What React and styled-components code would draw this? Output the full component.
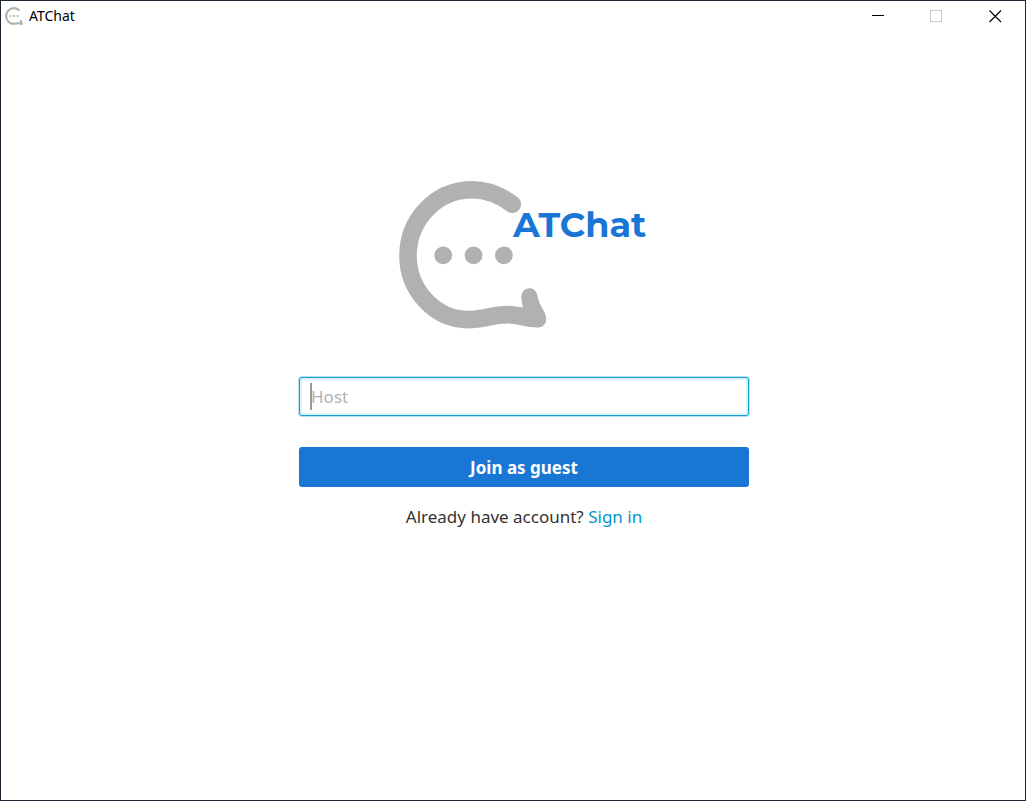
import React from "react";
import styled, { createGlobalStyle } from "styled-components";

const GlobalStyle = createGlobalStyle`
  *, *::before, *::after { box-sizing: border-box; }
  body {
    margin: 0;
    background: #fff;
    font-family: "Segoe UI", "Noto Sans", "Open Sans", sans-serif;
  }
`;

const Window = styled.div`
  display: flex;
  flex-direction: column;
  min-height: 100vh;
  border: 1px solid #1c2733;
  background: #fff;
`;

const TitleBar = styled.header`
  display: flex;
  align-items: center;
  justify-content: space-between;
  height: 30px;
`;

const AppTitle = styled.div`
  display: flex;
  align-items: center;
  gap: 6px;
  padding-left: 4px;
  font-size: 14px;
  line-height: 20px;
  color: #000;
`;

const WindowControls = styled.div`
  display: flex;
  height: 100%;
`;

const ControlButton = styled.button`
  display: flex;
  align-items: center;
  justify-content: center;
  width: 59px;
  padding: 0;
  border: 0;
  background: none;
  color: #000;

  &:disabled { color: #ccc; }
`;

const Content = styled.main`
  display: flex;
  flex-direction: column;
  align-items: center;
  padding: 150px 0 0 22px;
`;

const Form = styled.form`
  display: flex;
  flex-direction: column;
  gap: 31px;
  width: 100%;
  max-width: 450px;
  margin-top: 46px;
`;

const Field = styled.label`
  position: relative;
  display: block;
`;

const HostInput = styled.input`
  display: block;
  width: 100%;
  height: 39px;
  padding: 0 11px;
  border: 1px solid #0c9fd0;
  border-radius: 3px;
  outline: 0;
  background: #fff;
  box-shadow: 0 0 0 1px #b5e3f2, inset 0 0 0 2px #dff2fa;
  font: inherit;
  font-size: 17px;
  color: #333;

  &::placeholder { color: #b2b2b2; opacity: 1; }
`;

const Caret = styled.span`
  position: absolute;
  top: 6px;
  left: 11px;
  width: 2px;
  height: 27px;
  background: #999;
`;

const JoinButton = styled.button`
  height: 40px;
  padding: 0;
  border: 0;
  border-radius: 3px;
  background: #1976d5;
  color: #fff;
  font: inherit;
  font-size: 17px;
  font-weight: 700;
`;

const SignInLine = styled.p`
  margin: 18px 0 0;
  font-size: 17px;
  line-height: 24px;
  color: #333;
`;

const SignInLink = styled.a`
  color: #0096c9;
  text-decoration: none;
`;

const BubbleShape = () => (
  <g>
    <path
      d="M113.3 23.3C101 14 88 8.8 73.3 8.8C37 8.8 9 39 9 74.7C9 109 36 138.6 69.3 138.6C84 138.6 94 133.6 108 133.6C120 133.6 127 137.6 138.3 137.7"
      fill="none"
      stroke="#b1b1b1"
      strokeWidth="17.6"
      strokeLinecap="round"
    />
    <path
      d="M122.3 117.5C122 111 126 107 131 107.3C136 107.7 138 111.5 139 117C140.5 125 147.4 131 147.2 138C147 143 144 146.5 138.3 146.5L123.8 127Z"
      fill="#b1b1b1"
    />
    <circle cx="44.2" cy="74.3" r="8.9" fill="#b1b1b1" />
    <circle cx="74.5" cy="74.3" r="8.9" fill="#b1b1b1" />
    <circle cx="104.9" cy="74.3" r="8.9" fill="#b1b1b1" />
  </g>
);

const Wordmark = styled.text`
  font-family: Montserrat, Inter, sans-serif;
  font-size: 35px;
  font-weight: 700;
  fill: #1976d5;
`;

export default function App() {
  return (
    <Window>
      <GlobalStyle />
      <TitleBar>
        <AppTitle>
          <svg width="18" height="18" viewBox="0 0 148 148" aria-hidden="true">
            <BubbleShape />
          </svg>
          <span>ATChat</span>
        </AppTitle>
        <WindowControls>
          <ControlButton type="button" aria-label="Minimize">
            <svg width="13" height="13" shapeRendering="crispEdges">
              <path d="M1 5.5H13" stroke="currentColor" />
            </svg>
          </ControlButton>
          <ControlButton type="button" aria-label="Maximize" disabled>
            <svg width="13" height="13" shapeRendering="crispEdges">
              <rect x="0.5" y="0.5" width="11" height="11" fill="none" stroke="currentColor" />
            </svg>
          </ControlButton>
          <ControlButton type="button" aria-label="Close">
            <svg width="13" height="13">
              <path d="M0.5 0.5L12 12M12 0.5L0.5 12" stroke="currentColor" strokeWidth="1.1" />
            </svg>
          </ControlButton>
        </WindowControls>
      </TitleBar>
      <Content>
        <svg width="250" height="150" viewBox="0 0 250 150" role="img" aria-label="ATChat">
          <BubbleShape />
          <Wordmark x="114" y="56">ATChat</Wordmark>
        </svg>
        <Form onSubmit={(event) => event.preventDefault()}>
          <Field>
            <HostInput type="text" name="host" placeholder="Host" aria-label="Host" />
            <Caret />
          </Field>
          <JoinButton type="submit">Join as guest</JoinButton>
        </Form>
        <SignInLine>
          Already have account? <SignInLink href="#sign-in">Sign in</SignInLink>
        </SignInLine>
      </Content>
    </Window>
  );
}
